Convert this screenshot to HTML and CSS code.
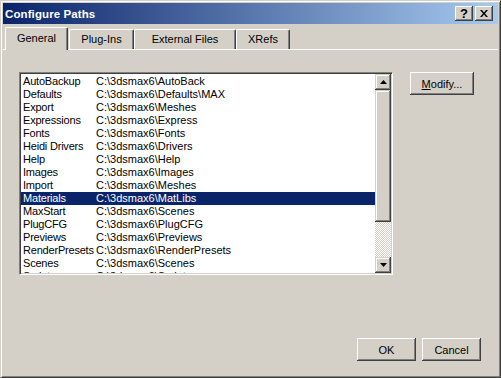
FILE: index.html
```html
<!DOCTYPE html>
<html lang="en">
<head>
    <meta charset="UTF-8">
    <title>Configure Paths</title>
    <link rel="stylesheet" href="styles.css">
</head>
<body>

<div class="window">

    <div class="title-bar">
        <span class="title">Configure Paths</span>
        <div class="caption-buttons">
            <button class="cap-btn help">?</button>
            <button class="cap-btn close">
                <svg width="8" height="7" viewBox="0 0 8 7"><path d="M0 0h2l2 2.5L6 0h2L5 3.5 8 7H6L4 4.5 2 7H0l3-3.5z" fill="#000"/></svg>
            </button>
        </div>
    </div>

    <div class="tabs">
        <div class="tab tab-general selected">General</div>
        <div class="tab tab-plugins">Plug-Ins</div>
        <div class="tab tab-external">External Files</div>
        <div class="tab tab-xrefs">XRefs</div>
    </div>

    <div class="panel">
        <div class="panel-top">
            <div class="listbox">
                <div class="rows">
                    <div class="row"><span class="name">AutoBackup</span><span>C:\3dsmax6\AutoBack</span></div>
                    <div class="row"><span class="name">Defaults</span><span>C:\3dsmax6\Defaults\MAX</span></div>
                    <div class="row"><span class="name">Export</span><span>C:\3dsmax6\Meshes</span></div>
                    <div class="row"><span class="name">Expressions</span><span>C:\3dsmax6\Express</span></div>
                    <div class="row"><span class="name">Fonts</span><span>C:\3dsmax6\Fonts</span></div>
                    <div class="row"><span class="name">Heidi Drivers</span><span>C:\3dsmax6\Drivers</span></div>
                    <div class="row"><span class="name">Help</span><span>C:\3dsmax6\Help</span></div>
                    <div class="row"><span class="name">Images</span><span>C:\3dsmax6\Images</span></div>
                    <div class="row"><span class="name">Import</span><span>C:\3dsmax6\Meshes</span></div>
                    <div class="row selected"><span class="name">Materials</span><span>C:\3dsmax6\MatLibs</span></div>
                    <div class="row"><span class="name">MaxStart</span><span>C:\3dsmax6\Scenes</span></div>
                    <div class="row"><span class="name">PlugCFG</span><span>C:\3dsmax6\PlugCFG</span></div>
                    <div class="row"><span class="name">Previews</span><span>C:\3dsmax6\Previews</span></div>
                    <div class="row"><span class="name">RenderPresets</span><span>C:\3dsmax6\RenderPresets</span></div>
                    <div class="row"><span class="name">Scenes</span><span>C:\3dsmax6\Scenes</span></div>
                    <div class="row"><span class="name">Scripts</span><span>C:\3dsmax6\Scripts</span></div>
                </div>
                <div class="scrollbar">
                    <div class="sb-btn">
                        <svg width="7" height="4" viewBox="0 0 7 4"><path d="M3.5 0L7 4H0z" fill="#000"/></svg>
                    </div>
                    <div class="sb-thumb"></div>
                    <div class="sb-track"></div>
                    <div class="sb-btn">
                        <svg width="7" height="4" viewBox="0 0 7 4"><path d="M0 0h7L3.5 4z" fill="#000"/></svg>
                    </div>
                </div>
            </div>
            <button class="btn modify"><u>M</u>odify...</button>
        </div>

        <div class="footer">
            <button class="btn">OK</button>
            <button class="btn">Cancel</button>
        </div>
    </div>

</div>

</body>
</html>
```

FILE: styles.css
```css
body {
    margin: 0;
    font-family: "Liberation Sans", Arial, sans-serif;
    font-size: 11px;
    color: #000;
    background: #d4d0c8;
}

.window {
    width: 501px;
    height: 378px;
    box-sizing: border-box;
    background: #d4d0c8;
    border: 1px solid;
    border-color: #d4d0c8 #404040 #404040 #d4d0c8;
    box-shadow: inset 1px 1px #fff, inset -1px -1px #808080;
    padding: 2px;
    display: flex;
    flex-direction: column;
}

.title-bar {
    height: 21px;
    flex: none;
    display: flex;
    align-items: center;
    justify-content: space-between;
    padding-left: 2px;
    padding-right: 5px;
    background: linear-gradient(to right, #0a246a, #a6caf0);
}

.title {
    color: #fff;
    font-weight: bold;
    font-size: 11.5px;
    letter-spacing: 0.1px;
}

.caption-buttons {
    display: flex;
    gap: 2px;
}

.cap-btn {
    width: 18px;
    height: 15px;
    padding: 0;
    border: none;
    background: #d4d0c8;
    box-shadow: inset -1px -1px #404040, inset 1px 1px #fff, inset -2px -2px #808080;
    display: flex;
    align-items: center;
    justify-content: center;
}

.cap-btn.help {
    font-family: "Liberation Sans", Arial, sans-serif;
    font-weight: bold;
    font-size: 13px;
    line-height: 13px;
    padding-bottom: 1px;
}

.tabs {
    height: 25px;
    flex: none;
    display: flex;
    align-items: flex-end;
    padding-left: 2px;
}

.tab {
    height: 20px;
    box-sizing: border-box;
    border-left: 1px solid #fff;
    border-top: 1px solid #fff;
    border-right: 1px solid #404040;
    border-radius: 2px 2px 0 0;
    box-shadow: inset -1px 0 #808080;
    display: flex;
    align-items: center;
    justify-content: center;
    padding-bottom: 1px;
}

.tab.selected {
    height: 23px;
    margin-bottom: -1px;
    position: relative;
    background: #d4d0c8;
    padding-bottom: 3px;
}

.tab-general { width: 63px; margin-right: 1px; }
.tab-plugins { width: 65px; }
.tab-external { width: 102px; }
.tab-xrefs { width: 54px; }

.panel {
    flex: 1;
    border-top: 1px solid #fff;
    display: flex;
    flex-direction: column;
}

.panel-top {
    display: flex;
    align-items: flex-start;
    padding: 22px 0 0 16px;
}

.listbox {
    width: 374px;
    height: 203px;
    box-sizing: border-box;
    background: #fff;
    border: 1px solid;
    border-color: #808080 #fff #fff #808080;
    box-shadow: inset 1px 1px #404040, inset -1px -1px #d4d0c8;
    padding: 1px;
    display: flex;
}

.rows {
    flex: 1;
    height: 199px;
    overflow: hidden;
    padding-top: 1px;
    box-sizing: border-box;
}

.row {
    height: 13px;
    line-height: 13px;
    display: flex;
    white-space: nowrap;
    padding-left: 2px;
}

.row .name {
    width: 73px;
    flex: none;
    letter-spacing: -0.2px;
}

.row.selected {
    background: #0a246a;
    color: #fff;
}

.scrollbar {
    width: 16px;
    height: 199px;
    display: flex;
    flex-direction: column;
}

.sb-btn,
.sb-thumb {
    background: #d4d0c8;
    box-shadow: inset -1px -1px #404040, inset 1px 1px #d4d0c8, inset -2px -2px #808080, inset 2px 2px #fff;
}

.sb-btn {
    height: 16px;
    display: flex;
    align-items: center;
    justify-content: center;
}

.sb-thumb {
    height: 132px;
}

.sb-track {
    flex: 1;
    background: repeating-conic-gradient(#fff 0 25%, #d4d0c8 0 50%) 0 0 / 2px 2px;
}

.btn {
    font-family: "Liberation Sans", Arial, sans-serif;
    font-size: 11px;
    color: #000;
    height: 23px;
    padding: 0;
    border: none;
    background: #d4d0c8;
    box-shadow: inset -1px -1px #404040, inset 1px 1px #fff, inset -2px -2px #808080;
}

.modify {
    width: 64px;
    margin-left: 17px;
}

.footer {
    margin-top: auto;
    display: flex;
    justify-content: flex-end;
    gap: 6px;
    padding: 0 17px 14px 0;
}

.footer .btn {
    width: 59px;
}
```
